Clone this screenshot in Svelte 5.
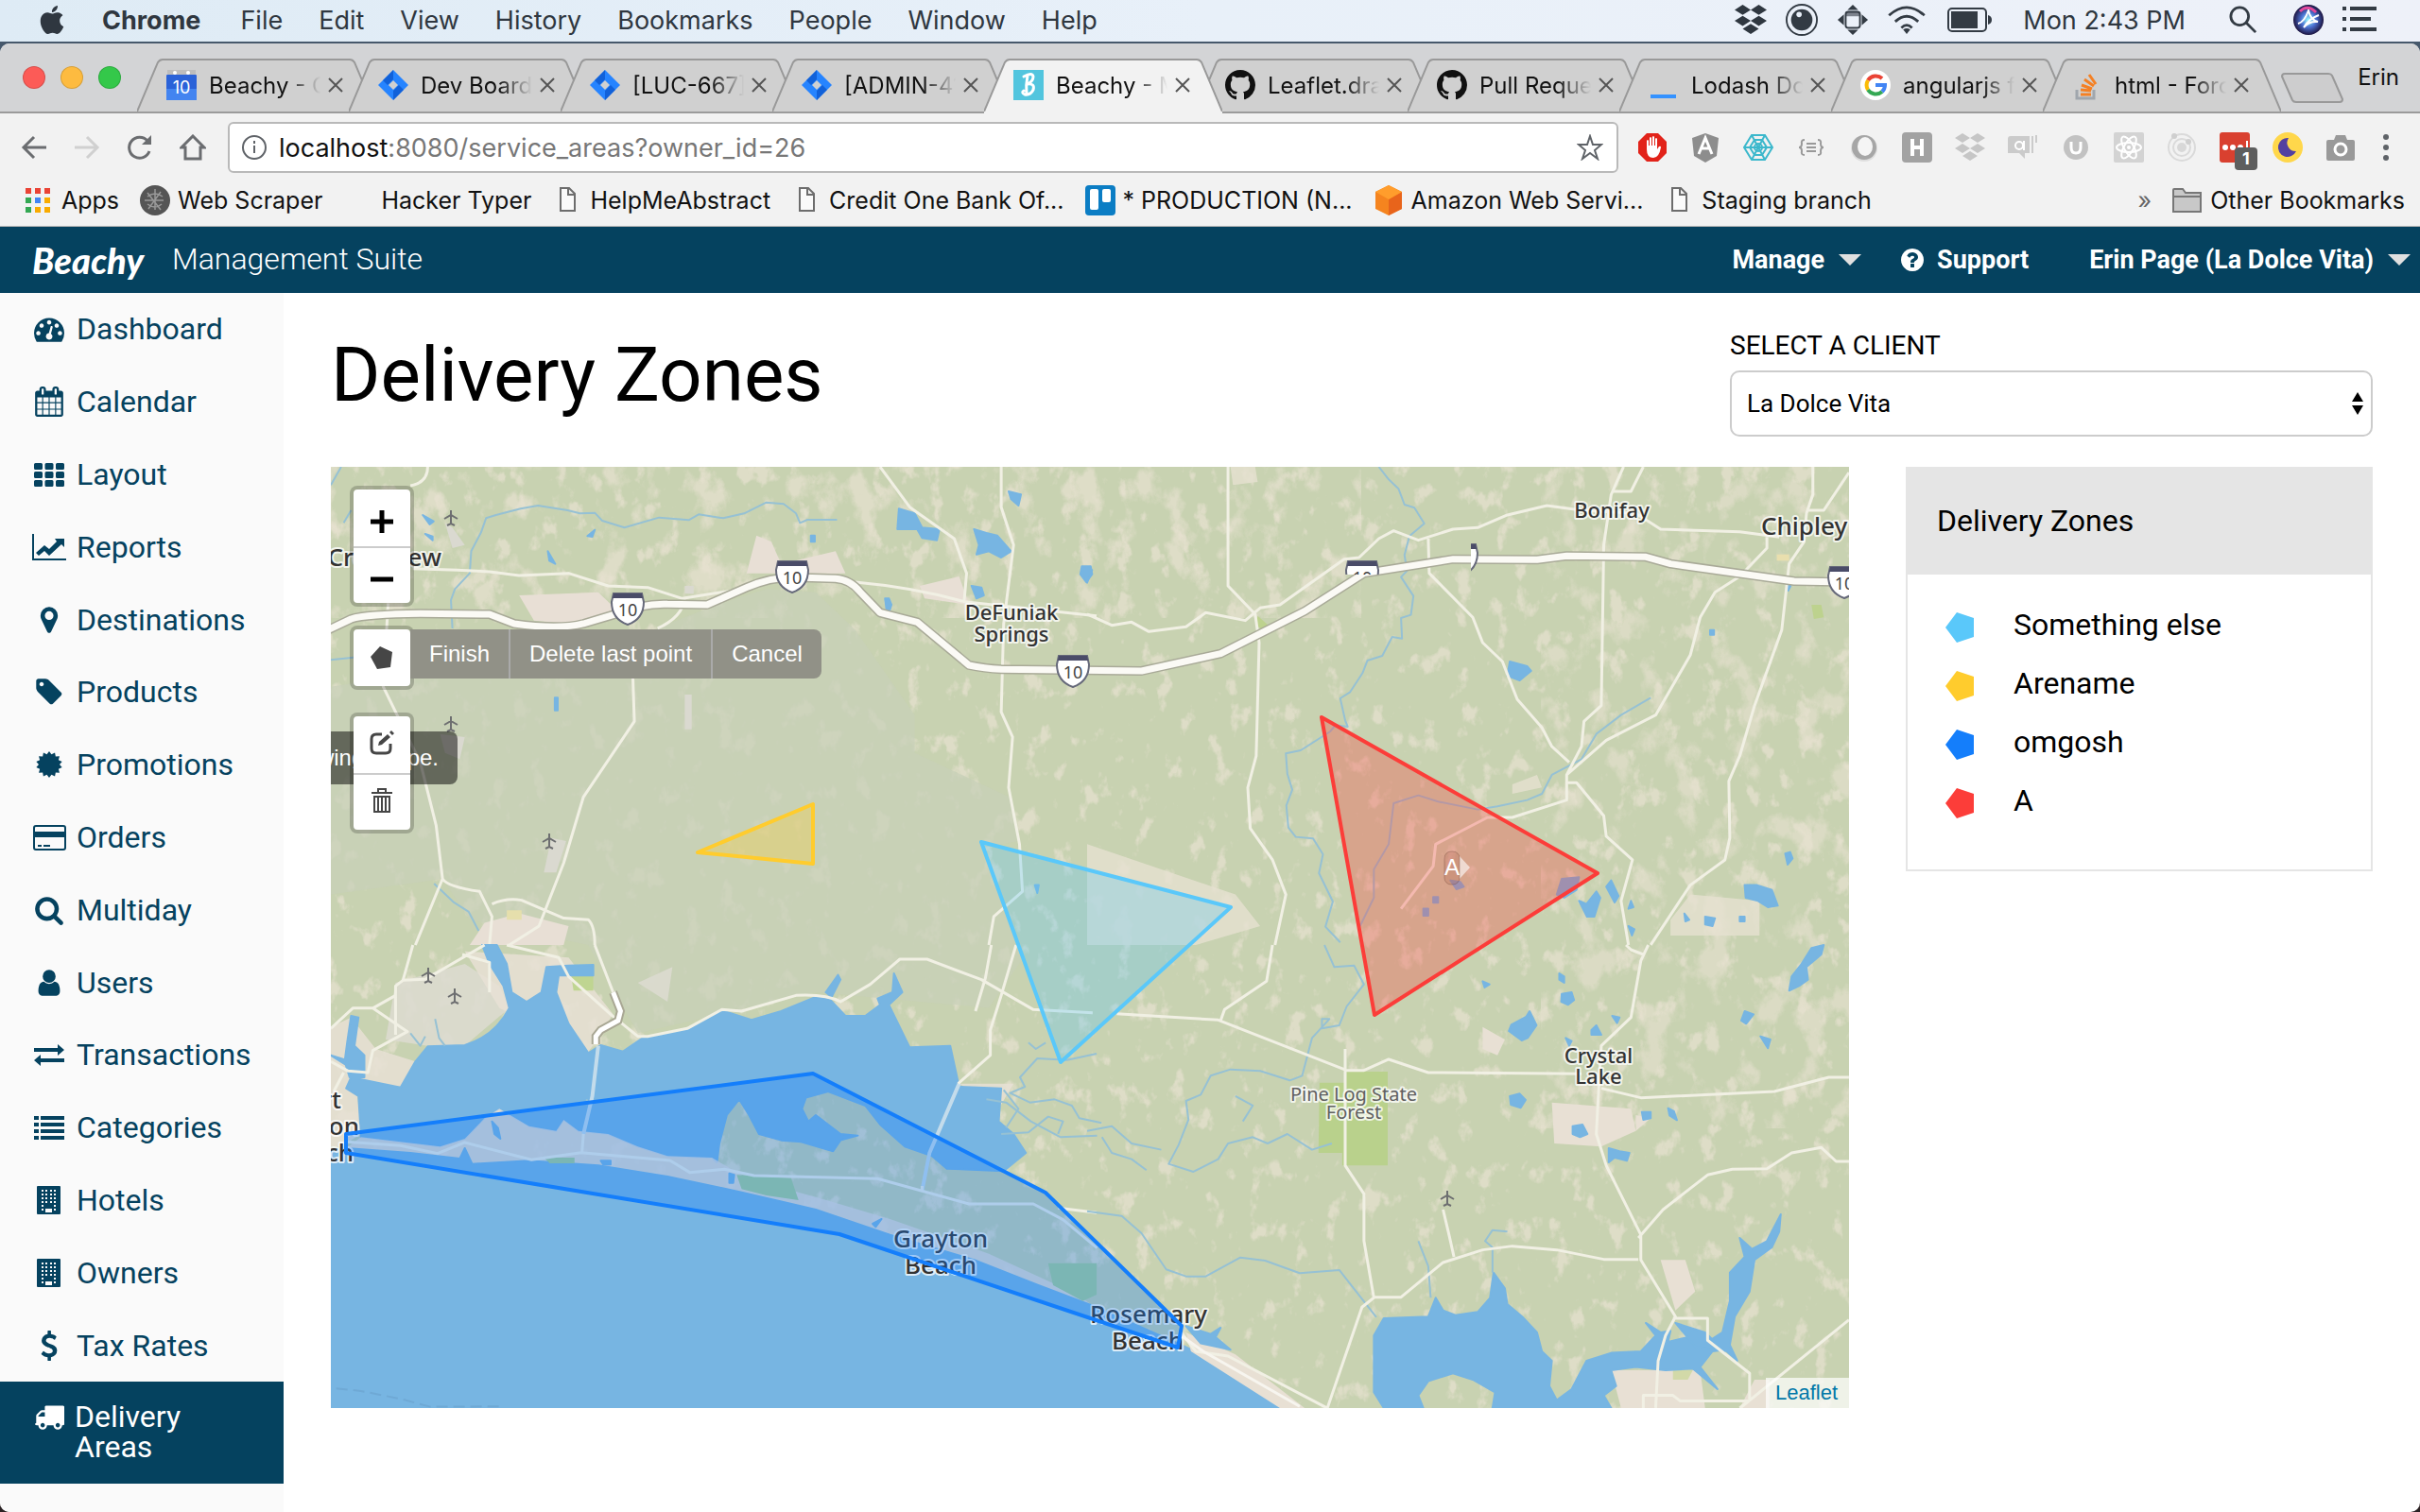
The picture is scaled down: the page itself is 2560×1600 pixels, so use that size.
<script>
  const menus = ['File', 'Edit', 'View', 'History', 'Bookmarks', 'People', 'Window', 'Help'];

  const tabs = [
    { icon: 'calendar', title: 'Beachy - Calendar' },
    { icon: 'jira', title: 'Dev Board - Agile' },
    { icon: 'jira', title: '[LUC-667] Map' },
    { icon: 'jira', title: '[ADMIN-412] Zones' },
    { icon: 'beachy', title: 'Beachy - Management', active: true },
    { icon: 'github', title: 'Leaflet.draw docs' },
    { icon: 'github', title: 'Pull Requests' },
    { icon: 'lodash', title: 'Lodash Documentation' },
    { icon: 'google', title: 'angularjs filter' },
    { icon: 'stack', title: 'html - Force width' }
  ];

  const bookmarks = [
    { icon: 'apps', title: 'Apps' },
    { icon: 'scraper', title: 'Web Scraper' },
    { icon: 'none', title: 'Hacker Typer' },
    { icon: 'doc', title: 'HelpMeAbstract' },
    { icon: 'doc', title: 'Credit One Bank Of...' },
    { icon: 'trello', title: '* PRODUCTION (N...' },
    { icon: 'aws', title: 'Amazon Web Servi...' },
    { icon: 'doc', title: 'Staging branch' }
  ];

  const extensions = ['block', 'angular', 'web', 'braces', 'ball', 'h', 'dropbox', 'chat', 'u', 'react', 'orbit', 'lastpass', 'moon', 'camera'];

  const navigation = ['Dashboard', 'Calendar', 'Layout', 'Reports', 'Destinations', 'Products', 'Promotions', 'Orders', 'Multiday', 'Users', 'Transactions', 'Categories', 'Hotels', 'Owners', 'Tax Rates'];

  const zones = [
    { name: 'Something else', color: '#5ac8fa' },
    { name: 'Arename', color: '#ffcc2d' },
    { name: 'omgosh', color: '#147efb' },
    { name: 'A', color: '#fc3d39' }
  ];

  const shapes = [
    { color: '#ffcc2d', points: '738,902 860,851 860,914' },
    { color: '#5ac8fa', points: '1038,891 1302,960 1122,1124' },
    { color: '#147efb', points: '366,1200 860,1136 1106,1262 1250,1403 1246,1426 888,1306 366,1220' },
    { color: '#fc3d39', points: '1398,759 1690,924 1454,1074' }
  ];

  const planes = [[477, 548], [477, 766], [581, 890], [453, 1032], [481, 1054], [1531, 1268]];

  function star(points, outer, inner) {
    let d = '';
    for (let i = 0; i < points * 2; i++) {
      const r = i % 2 ? inner : outer;
      const a = (Math.PI * i) / points;
      d += `${i ? 'L' : 'M'}${(16 + r * Math.sin(a)).toFixed(2)} ${(16 - r * Math.cos(a)).toFixed(2)}`;
    }
    return d + 'Z';
  }

  function grid(xs, ys, w, h) {
    return ys.map((y) => xs.map((x) => `M${x} ${y}h${w}v${h}h-${w}z`).join('')).join('');
  }

  const building = 'M4 1h23q1 0 1 1v28q0 1-1 1H4q-1 0-1-1V2q0-1 1-1z' + grid([8, 12, 17, 21], [5, 9, 13, 17], 2, 2) + grid([8, 21], [21, 25], 2, 2) + 'M12 25h7v4h-7z';

  const icons = {
    Dashboard: [1792, 'M384 1152q0-53-37.5-90.5t-90.5-37.5-90.5 37.5-37.5 90.5 37.5 90.5 90.5 37.5 90.5-37.5 37.5-90.5zm192-448q0-53-37.5-90.5t-90.5-37.5-90.5 37.5-37.5 90.5 37.5 90.5 90.5 37.5 90.5-37.5 37.5-90.5zm428 481l101-382q6-26-7.5-48.5t-38.5-29.5-48 6.5-30 39.5l-101 382q-60 5-107 43.5t-63 98.5q-20 77 20 146t117 89 146-20 89-117q16-60-6-117t-72-91zm660-33q0-53-37.5-90.5t-90.5-37.5-90.5 37.5-37.5 90.5 37.5 90.5 90.5 37.5 90.5-37.5 37.5-90.5zm-640-640q0-53-37.5-90.5t-90.5-37.5-90.5 37.5-37.5 90.5 37.5 90.5 90.5 37.5 90.5-37.5 37.5-90.5zm448 192q0-53-37.5-90.5t-90.5-37.5-90.5 37.5-37.5 90.5 37.5 90.5 90.5 37.5 90.5-37.5 37.5-90.5zm320 448q0 261-141 483-19 29-54 29h-1402q-35 0-54-29-141-221-141-483 0-182 71-348t191-286 286-191 348-71 348 71 286 191 191 286 71 348z'],
    Calendar: [1792, 'M192 1664h288v-288h-288v288zm352 0h320v-288h-320v288zm-352-352h288v-320h-288v320zm352 0h320v-320h-320v320zm-352-384h288v-288h-288v288zm736 736h320v-288h-320v288zm-384-736h320v-288h-320v288zm768 736h288v-288h-288v288zm-384-352h320v-320h-320v320zm-352-864v-288q0-13-9.5-22.5t-22.5-9.5h-64q-13 0-22.5 9.5t-9.5 22.5v288q0 13 9.5 22.5t22.5 9.5h64q13 0 22.5-9.5t9.5-22.5zm736 864h288v-320h-288v320zm-384-384h320v-288h-320v288zm384 0h288v-288h-288v288zm32-480v-288q0-13-9.5-22.5t-22.5-9.5h-64q-13 0-22.5 9.5t-9.5 22.5v288q0 13 9.5 22.5t22.5 9.5h64q13 0 22.5-9.5t9.5-22.5zm384-64v1280q0 52-38 90t-90 38h-1408q-52 0-90-38t-38-90v-1280q0-52 38-90t90-38h128v-96q0-66 47-113t113-47h64q66 0 113 47t47 113v96h384v-96q0-66 47-113t113-47h64q66 0 113 47t47 113v96h128q52 0 90 38t38 90z'],
    Layout: [32, [0, 11.5, 23].map((x) => [4, 13, 22].map((y) => `M${x + 1.5} ${y}h6q1.5 0 1.5 1.5v4q0 1.5-1.5 1.5h-6q-1.5 0-1.5-1.5v-4q0-1.5 1.5-1.5z`).join('')).join('')],
    Reports: [32, 'M-2 2h2v26h34v2H-2zM2 22l9-8 5 4 8-8-2-3h10v9l-3-3-13 12-5-5-6 5z'],
    Destinations: [1792, 'M1152 640q0-106-75-181t-181-75-181 75-75 181 75 181 181 75 181-75 75-181zm256 0q0 109-33 179l-364 774q-16 33-47.5 52t-67.5 19-67.5-19-46.5-52l-365-774q-33-70-33-179 0-212 150-362t362-150 362 150 150 362z'],
    Products: [1792, 'M576 448q0-53-37.5-90.5t-90.5-37.5-90.5 37.5-37.5 90.5 37.5 90.5 90.5 37.5 90.5-37.5 37.5-90.5zm1067 576q0 53-37 90l-491 492q-39 37-91 37-53 0-90-37l-715-716q-38-37-64.5-101t-26.5-117v-416q0-52 38-90t90-38h416q53 0 117 26.5t102 64.5l715 714q37 39 37 91z'],
    Promotions: [32, star(14, 14, 11)],
    Orders: [32, 'M2 3h29q3 0 3 3v21q0 3-3 3H2q-3 0-3-3V6q0-3 3-3zM2 5q-1 0-1 1v4h31V6q0-1-1-1zM1 16v11q0 1 1 1h29q1 0 1-1V16zM4 24h4v2H4zM10 24h7v2h-7z'],
    Multiday: [1792, 'M1216 832q0-185-131.5-316.5t-316.5-131.5-316.5 131.5-131.5 316.5 131.5 316.5 316.5 131.5 316.5-131.5 131.5-316.5zm512 832q0 52-38 90t-90 38q-54 0-90-38l-343-342q-179 124-399 124-143 0-273.5-55.5t-225-150-150-225-55.5-273.5 55.5-273.5 150-225 225-150 273.5-55.5 273.5 55.5 225 150 150 225 55.5 273.5q0 220-124 399l343 343q37 37 37 90z'],
    Users: [1792, 'M1536 1399q0 109-62.5 187t-150.5 78h-854q-88 0-150.5-78t-62.5-187q0-85 8.5-160.5t31.5-152 58.5-131 94-89 134.5-34.5q131 128 313 128t313-128q76 0 134.5 34.5t94 89 58.5 131 31.5 152 8.5 160.5zm-256-887q0 159-112.5 271.5t-271.5 112.5-271.5-112.5-112.5-271.5 112.5-271.5 271.5-112.5 271.5 112.5 112.5 271.5z'],
    Transactions: [32, 'M0 9h25V5l7 6-7 6v-4H0zM32 20H7v-4l-7 6 7 6v-4h25z'],
    Categories: [32, [4, 11, 18, 25].map((y) => `M0 ${y}h5v4h-5zM7 ${y}h25v4h-25z`).join('')],
    Hotels: [32, building],
    Owners: [32, building],
    'Tax Rates': [1792, 'M1362 1185q0 153-99.5 263.5t-258.5 136.5v175q0 14-9 23t-23 9h-135q-13 0-22.5-9.5t-9.5-22.5v-175q-66-9-127.5-31t-101.5-44.5-74-48-46.5-37.5-17.5-18q-17-21-2-41l103-135q7-10 23-12 15-2 24 9l2 2q113 99 243 125 37 8 74 8 81 0 142.5-43t61.5-122q0-28-15-53t-33.5-42-58.5-37.5-66-32-80-32.5q-39-16-61.5-25t-61.5-26.5-62.5-31-56.5-35.5-53.5-42.5-43.5-49-35.5-58-21-66.5-8.5-78q0-138 98-242t255-134v-180q0-13 9.5-22.5t22.5-9.5h135q14 0 23 9t9 23v176q57 6 110.5 23t87 33.5 63.5 37.5 39 29 15 14q17 18 5 38l-81 146q-8 15-23 16-14 3-27-7-3-3-14.5-12t-39-26.5-58.5-32-74.5-26-85.5-11.5q-95 0-155 43t-60 111q0 26 8.5 48t29.5 41.5 39.5 33 56 31 60.5 27 70 27.5q53 20 81 31.5t76 35 75.5 42.5 62 50 53 63.5 31.5 76.5 13 94z'],
    Delivery: [1792, 'M640 1408q0-52-38-90t-90-38-90 38-38 90 38 90 90 38 90-38 38-90zm-384-512h384v-256h-158q-13 0-22 9l-195 195q-9 9-9 22v30zm1280 512q0-52-38-90t-90-38-90 38-38 90 38 90 90 38 90-38 38-90zm256-1088v1024q0 15-4 26.5t-13.5 18.5-16.5 11.5-23.5 6-22.5 2-25.5 0-22.5-.5q0 106-75 181t-181 75-181-75-75-181h-384q0 106-75 181t-181 75-181-75-75-181h-64q-3 0-22.5.5t-25.5 0-22.5-2-23.5-6-16.5-11.5-13.5-18.5-4-26.5q0-26 19-45t45-19v-320q0-8-.5-35t0-38 2.5-34.5 6.5-37 14-30.5 22.5-30l198-198q19-19 50.5-32t58.5-13h160v-192q0-26 19-45t45-19h1024q26 0 45 19t19 45z'],
    help: [1792, 'M1024 1376v-192q0-14-9-23t-23-9h-192q-14 0-23 9t-9 23v192q0 14 9 23t23 9h192q14 0 23-9t9-23zm256-672q0-88-55.5-163t-138.5-116-170-41q-243 0-371 213-15 24 8 42l132 100q7 6 19 6 16 0 25-12 53-68 86-92 34-24 86-24 48 0 85.5 26t37.5 59q0 38-20 61t-68 45q-63 28-115.5 86.5t-52.5 125.5v36q0 14 9 23t23 9h192q14 0 23-9t9-23q0-19 21.5-49.5t54.5-49.5q32-18 49-28.5t46-35 44.5-48 28-60.5 12.5-81zm384 192q0 209-103 385.5t-279.5 279.5-385.5 103-385.5-103-279.5-279.5-103-385.5 103-385.5 279.5-279.5 385.5-103 385.5 103 279.5 279.5 103 385.5z'],
    apple: [24, 'M12.152 6.896c-.948 0-2.415-1.078-3.96-1.04-2.04.027-3.91 1.183-4.961 3.014-2.117 3.675-.546 9.103 1.519 12.09 1.013 1.454 2.208 3.09 3.792 3.039 1.52-.065 2.09-.987 3.935-.987 1.831 0 2.35.987 3.96.948 1.637-.026 2.676-1.48 3.676-2.948 1.156-1.688 1.636-3.325 1.662-3.415-.039-.013-3.182-1.221-3.22-4.857-.026-3.04 2.48-4.494 2.597-4.559-1.429-2.09-3.623-2.324-4.39-2.376-2-.156-3.675 1.09-4.61 1.09zM15.53 3.83c.843-1.012 1.4-2.427 1.245-3.83-1.207.052-2.662.805-3.532 1.818-.78.896-1.454 2.338-1.273 3.714 1.338.104 2.715-.688 3.559-1.701'],
    github: [16, 'M8 0C3.58 0 0 3.58 0 8c0 3.54 2.29 6.53 5.47 7.59.4.07.55-.17.55-.38 0-.19-.01-.82-.01-1.49-2.01.37-2.53-.49-2.69-.94-.09-.23-.48-.94-.82-1.13-.28-.15-.68-.52-.01-.53.63-.01 1.08.58 1.23.82.72 1.21 1.87.87 2.33.66.07-.52.28-.87.51-1.07-1.78-.2-3.64-.89-3.64-3.95 0-.87.31-1.59.82-2.15-.08-.2-.36-1.02.08-2.12 0 0 .67-.21 2.2.82.64-.18 1.32-.27 2-.27s1.36.09 2 .27c1.53-1.04 2.2-.82 2.2-.82.44 1.1.16 1.92.08 2.12.51.56.82 1.27.82 2.15 0 3.07-1.87 3.75-3.65 3.95.29.25.54.73.54 1.48 0 1.07-.01 1.93-.01 2.2 0 .21.15.46.55.38A8.01 8.01 0 0 0 16 8c0-4.42-3.58-8-8-8z'],
    dropbox: [32, 'M8 1l8 5-8 5-8-5zM24 1l8 5-8 5-8-5zM8 12l8 5-8 5-8-5zM24 12l8 5-8 5-8-5zM16 20l8 5-8 5-8-5z']
  };
</script>

{#snippet glyph(name)}
  <svg class="glyph" viewBox="0 0 {icons[name][0]} {icons[name][0]}" aria-hidden="true"><path fill-rule="evenodd" d={icons[name][1]} /></svg>
{/snippet}

{#snippet favicon(name)}
  {#if name === 'github'}
    {@render glyph('github')}
  {:else}
    <svg class="glyph" viewBox="0 0 32 32" aria-hidden="true">
      {#if name === 'calendar'}
        <rect x="1" width="30" height="7" fill="#bdbdbd" /><circle cx="9" cy="3" r="2" fill="#fff" /><circle cx="23" cy="3" r="2" fill="#fff" />
        <rect y="5" width="32" height="27" rx="1" fill="#2a62d8" /><path d="M0 20h32v12H0z" fill="#4384f0" />
        <text x="16" y="25" text-anchor="middle" class="fav-day">10</text>
      {:else if name === 'jira'}
        <path d="M16 0l16 16-16 16L0 16z" fill="#2684ff" /><path d="M16 0v10l-6 6L5 11zM16 32V22l6-6 5 5z" fill="#0b55cc" opacity=".75" /><path d="M16 11l5 5-5 5-5-5z" fill="#d0d0d0" />
      {:else if name === 'beachy'}
        <rect width="32" height="32" fill="#52c5de" /><path d="M11 7q9-5 10 0 0 5-6 8 8-1 6 6-3 6-9 5-4-2-1-4M15 6q-2 10-1 20" fill="none" stroke="#fff" stroke-width="3" stroke-linecap="round" />
      {:else if name === 'lodash'}
        <path d="M2 26h27v4H2z" fill="#3492ff" />
      {:else if name === 'google'}
        <circle cx="16" cy="16" r="16" fill="#fff" />
        <g fill="none" stroke-width="4"><path d="M8 11a10 10 0 0 1 15-2" stroke="#ea4335" /><path d="M8 11a10 10 0 0 0 0 10" stroke="#fbbc05" /><path d="M8 21a10 10 0 0 0 15 2" stroke="#34a853" /><path d="M23 23q3-3 3-7H16" stroke="#4285f4" /></g>
      {:else if name === 'stack'}
        <path d="M5 21v9h18v-9" fill="none" stroke="#a0a6ad" stroke-width="3" /><path d="M9 26h11M9 21l11 1M10 16l11 4M13 10l10 7M18 5l7 10" stroke="#f48024" stroke-width="3" />
      {:else if name === 'apps'}
        {#each [0, 1, 2] as r}{#each [0, 1, 2] as c}<rect x={2 + c * 10} y={3 + r * 10} width="6" height="6" fill={[['#ea4335', '#ea4335', '#ea4335'], ['#34a853', '#4285f4', '#f9ab00'], ['#34a853', '#f9ab00', '#f9ab00']][r][c]} />{/each}{/each}
      {:else if name === 'scraper'}
        <circle cx="16" cy="16" r="16" fill="#555" /><path d="M8 8l14 18M22 7L9 25M5 16h20M16 4v22M8 12q8-6 16 0M8 20q8 6 15 0" fill="none" stroke="#999" stroke-width="1.5" />
      {:else if name === 'doc'}
        <path d="M9 3h9l6 6v18H9zM17 3v7h7" fill="#fafafa" stroke="#6d6d6d" stroke-width="2" />
      {:else if name === 'trello'}
        <rect width="32" height="32" rx="4" fill="#0b7dc4" /><rect x="5" y="4" width="9" height="22" rx="2" fill="#fff" /><rect x="18" y="4" width="9" height="14" rx="2" fill="#fff" />
      {:else if name === 'aws'}
        <path d="M16 0l14 7v18l-14 7-14-7V7z" fill="#f5841f" /><path d="M16 15l14-8v18l-14 7z" fill="#e8641b" /><path d="M2 7l14-7 14 7-14 8z" fill="#ff9d2c" />
      {/if}
    </svg>
  {/if}
{/snippet}

{#snippet extension(name)}
  {#if name === 'dropbox'}
    <span class="pale">{@render glyph('dropbox')}</span>
  {:else}
    <svg class="glyph" viewBox="0 0 32 32" aria-hidden="true">
      {#if name === 'block'}
        <path d="M10 1h12l9 9v12l-9 9H10l-9-9V10z" fill="#e2231a" /><path d="M10 18V9q1-2 2 0v5h1V6q1-2 2 0v8h1V5q1-2 2 0v9h1V7q1-2 2 0v11l2-3q2-1 2 1-2 11-8 11-7 0-7-9z" fill="#fff" />
      {:else if name === 'angular'}
        <path d="M16 1l14 5-2 19-12 7-12-7L2 6z" fill="#8d8d8d" /><path d="M9 23l7-17 7 17M12 17h8" fill="none" stroke="#fff" stroke-width="3" />
      {:else if name === 'web'}
        <g fill="none" stroke="#3cb8cc" stroke-width="2"><path d="M9 3h14l8 13-8 13H9L1 16z" /><path d="M12 8h8l5 8-5 8h-8l-5-8zM9 3l14 26M23 3L9 29M1 16h30" /><circle cx="16" cy="16" r="4" /></g>
      {:else if name === 'braces'}
        <path d="M9 8q-4 0-3 4 0 4-3 4 3 0 3 4-1 4 3 4M23 8q4 0 3 4 0 4 3 4-3 0-3 4 1 4-3 4M11 12h10M11 16h10M11 20h10" fill="none" stroke="#999" stroke-width="2" />
      {:else if name === 'ball'}
        <circle cx="16" cy="17" r="14" fill="#dedede" /><circle cx="16" cy="16" r="13" fill="#a6a6a6" /><ellipse cx="17" cy="15" rx="8" ry="10" fill="#f5f5f5" />
      {:else if name === 'h'}
        <rect width="32" height="32" rx="4" fill="#a2a2a2" /><path d="M11 7v18M21 7v18M11 16h10" stroke="#fff" stroke-width="4" />
      {:else if name === 'chat'}
        <path d="M0 7q0-3 3-3h20v18h-5v6l-6-6H0z" fill="#cbcbcb" /><path d="M25 4h2v18h-2zM29 3h2v8h-2z" fill="#cbcbcb" /><circle cx="12" cy="14" r="4" fill="none" stroke="#fff" stroke-width="2" /><path d="M17 9v10" stroke="#fff" stroke-width="2" />
      {:else if name === 'u'}
        <circle cx="16" cy="16" r="13" fill="#c2c2c2" /><path d="M11 10v6q0 6 5 6t5-6v-6" fill="none" stroke="#fff" stroke-width="3" />
      {:else if name === 'react'}
        <rect width="32" height="32" rx="2" fill="#d3d3d3" /><g fill="none" stroke="#fff" stroke-width="2"><ellipse cx="16" cy="16" rx="13" ry="5" /><ellipse cx="16" cy="16" rx="13" ry="5" transform="rotate(60 16 16)" /><ellipse cx="16" cy="16" rx="13" ry="5" transform="rotate(120 16 16)" /></g><circle cx="16" cy="16" r="2" fill="#fff" />
      {:else if name === 'orbit'}
        <g fill="none" stroke="#dadada" stroke-width="2"><circle cx="16" cy="16" r="14" /><circle cx="16" cy="16" r="9" /></g><circle cx="16" cy="16" r="5" fill="#d8d8d8" /><circle cx="8" cy="4" r="3" fill="#cfcfcf" /><circle cx="23" cy="10" r="3" fill="#cfcfcf" />
      {:else if name === 'lastpass'}
        <rect width="32" height="32" rx="3" fill="#d9402f" /><g fill="#fff"><circle cx="6" cy="16" r="3" /><circle cx="14" cy="16" r="3" /><circle cx="22" cy="16" r="3" /><path d="M28 9h2v14h-2z" /></g>
      {:else if name === 'moon'}
        <circle cx="16" cy="16" r="16" fill="#ffd74b" /><path d="M17 6a10 10 0 1 0 8 14A9 9 0 0 1 17 6z" fill="#5340a0" />
      {:else if name === 'camera'}
        <path d="M3 8h6l2-5h10l2 5h6q2 0 2 2v18q0 2-2 2H3q-2 0-2-2V10q0-2 2-2z" fill="#999" /><circle cx="16" cy="18" r="6" fill="none" stroke="#fff" stroke-width="3" />
      {/if}
    </svg>
  {/if}
{/snippet}

{#snippet shield(x, y)}
  <g transform="translate({x} {y})">
    <path d="M-15-16h30l2 9q0 18-17 24-17-6-17-24z" class="shield" /><path d="M-15-16h30l1 5h-32z" class="shield-top" />
    <text y="8" text-anchor="middle" class="shield-text">10</text>
  </g>
{/snippet}

<div class="desktop">
  <header class="menubar">
    <nav class="menus" aria-label="Menu bar">
      <button class="apple" aria-label="Apple">{@render glyph('apple')}</button>
      <button class="app-name">Chrome</button>
      {#each menus as menu}<button>{menu}</button>{/each}
    </nav>
    <div class="status">
      <span class="st">{@render glyph('dropbox')}</span>
      <svg class="st" viewBox="0 0 36 36" aria-hidden="true"><circle cx="18" cy="18" r="17" fill="none" stroke="#333b44" stroke-width="2" /><circle cx="18" cy="18" r="12" fill="#333b44" /><circle cx="15" cy="12" r="3" fill="#e8eff8" /></svg>
      <svg class="st" viewBox="0 0 36 36" aria-hidden="true"><g fill="#333b44"><path d="M18 1l6 6H12zM18 35l6-6H12zM1 18l7-6v12zM35 18l-7-6v12z" /><path d="M10 9h16v5H10z" opacity=".6" /></g><rect x="10" y="9" width="16" height="18" rx="3" fill="none" stroke="#333b44" stroke-width="2" /></svg>
      <svg class="st wifi" viewBox="0 0 42 32" aria-hidden="true"><g fill="none" stroke="#333b44" stroke-width="3"><path d="M1 11q20-18 40 0M8 18q13-12 26 0M15 25q6-6 12 0" /></g><path d="M21 32l-4-5q4-3 8 0z" fill="#333b44" /></svg>
      <svg class="st battery" viewBox="0 0 48 26" aria-hidden="true"><rect x="1" y="1" width="40" height="24" rx="4" fill="none" stroke="#333b44" stroke-width="2" /><path d="M4 4h28v18H4z" fill="#333b44" /><path d="M43 8q4 1 4 5t-4 5z" fill="#333b44" /></svg>
      <time>Mon 2:43 PM</time>
      <svg class="st search" viewBox="0 0 32 32" aria-hidden="true"><g fill="none" stroke="#333b44" stroke-width="3"><circle cx="12" cy="12" r="10" /><path d="M19 19l11 11" /></g></svg>
      <svg class="st" viewBox="0 0 34 34" aria-hidden="true"><defs><radialGradient id="siri"><stop offset="0" stop-color="#9ff" /><stop offset=".5" stop-color="#4b6fd0" /><stop offset="1" stop-color="#1c1440" /></radialGradient></defs><circle cx="17" cy="17" r="16" fill="url(#siri)" /><path d="M6 21q7-2 11-14 2 10 10 12-9-1-15 6 5-9 16-13" fill="none" stroke="#fff" stroke-width="2" /><path d="M8 8q8-8 17 1" stroke="#e3489c" stroke-width="3" fill="none" /></svg>
      <svg class="st" viewBox="0 0 36 30" aria-hidden="true"><path d="M0 3h4M8 3h28M0 14h4M8 14h22M0 25h4M8 25h28" stroke="#333b44" stroke-width="4" /></svg>
    </div>
  </header>

  <div class="window">
    <div class="tabstrip">
      <div class="lights"><i class="red"></i><i class="amber"></i><i class="green"></i></div>
      <div class="tabs" role="tablist">
        {#each tabs as tab}
          <div class="tab" class:active={tab.active} role="tab" aria-selected={!!tab.active} tabindex="0">
            <svg class="tab-shape" viewBox="0 0 252 57" preserveAspectRatio="none" aria-hidden="true"><path d="M0 57L22 4Q24 1 27 1H225Q228 1 230 4L252 57" /></svg>
            <span class="fav">{@render favicon(tab.icon)}</span>
            <span class="tab-title">{tab.title}</span>
            <button class="close" aria-label="Close tab"><svg viewBox="0 0 16 16"><path d="M1 1l14 14M15 1L1 15" /></svg></button>
          </div>
        {/each}
      </div>
      <button class="new-tab" aria-label="New tab"><svg viewBox="0 0 66 32"><path d="M4 1H50Q53 1 54 3L65 28Q65 31 62 31H16Q13 31 12 29L1 4Q1 1 4 1Z" /></svg></button>
      <span class="profile">Erin</span>
    </div>

    <div class="toolbar">
      <button aria-label="Back"><svg viewBox="0 0 28 28"><path d="M27 14H3M14 3L3 14l11 11" /></svg></button>
      <button aria-label="Forward" class="off"><svg viewBox="0 0 28 28"><path d="M1 14h24M14 3l11 11-11 11" /></svg></button>
      <button aria-label="Reload"><svg viewBox="0 0 28 28"><path d="M24 18A11 11 0 1 1 22 7" /><path d="M26 1v10H16z" class="solid" /></svg></button>
      <button aria-label="Home"><svg viewBox="0 0 28 28"><path d="M2 14L14 2l12 12h-4v12H6V14z" /></svg></button>
      <div class="omnibox">
        <svg viewBox="0 0 28 28" aria-hidden="true"><circle cx="14" cy="14" r="12" /><path d="M14 12v8M14 7v3" /></svg>
        <a href="#address" class="url">localhost<span>:8080/service_areas?owner_id=26</span></a>
        <svg viewBox="0 0 28 28" aria-hidden="true"><path d="M14 2l3 9h9l-7 6 3 9-8-6-8 6 3-9-7-6h9z" /></svg>
      </div>
      <div class="extensions">
        {#each extensions as name}
          <button class="ext" aria-label={name}>{@render extension(name)}{#if name === 'lastpass'}<b class="badge">1</b>{/if}</button>
        {/each}
        <button class="ext dots" aria-label="Menu"><i></i><i></i><i></i></button>
      </div>
    </div>

    <nav class="bookmarks" aria-label="Bookmarks">
      {#each bookmarks as mark}
        <a href="#bookmark"><span class="fav">{@render favicon(mark.icon)}</span>{mark.title}</a>
      {/each}
      <span class="more">»</span>
      <a href="#bookmark"><span class="fav"><svg class="glyph" viewBox="0 0 32 32" aria-hidden="true"><path d="M1 9V5q0-1 1-1h9l3 4h16v20H1zM1 12h30" fill="#c8c8c8" stroke="#777" stroke-width="2" /></svg></span>Other Bookmarks</a>
    </nav>

    <header class="appbar">
      <a href="#home" class="logo">Beachy</a>
      <span class="suite">Management Suite</span>
      <button class="drop">Manage<i class="caret"></i></button>
      <a href="#support" class="support"><span>{@render glyph('help')}</span>Support</a>
      <button class="drop">Erin Page (La Dolce Vita)<i class="caret"></i></button>
    </header>

    <div class="body">
      <nav class="sidebar" aria-label="Main">
        <ul>
          {#each navigation as item}
            <li><a href="#{item}"><span class="ic">{@render glyph(item)}</span>{item}</a></li>
          {/each}
        </ul>
        <a href="#areas" class="current" aria-current="page"><span class="ic">{@render glyph('Delivery')}</span><span>Delivery Areas</span></a>
      </nav>

      <main>
        <div class="heading">
          <h1>Delivery Zones</h1>
          <div class="client">
            <label for="client">SELECT A CLIENT</label>
            <div class="select-wrap">
              <select id="client"><option>La Dolce Vita</option></select>
              <svg viewBox="0 0 12 24" aria-hidden="true"><path d="M6 0l6 10H0zM6 24l6-10H0z" /></svg>
            </div>
          </div>
        </div>

        <div class="columns">
          <section class="map" aria-label="Map">
            <svg class="canvas" viewBox="350 494 1606 996" preserveAspectRatio="xMidYMid slice">
              <defs>
                <filter id="fields" x="0" y="0" width="100%" height="100%" color-interpolation-filters="sRGB">
                  <feTurbulence type="fractalNoise" baseFrequency=".05 .035" numOctaves="4" seed="8" />
                  <feColorMatrix values="0 0 0 0 .91  0 0 0 0 .885  0 0 0 0 .82  7 0 0 0 -4.2" />
                </filter>
                <filter id="farms" x="0" y="0" width="100%" height="100%" color-interpolation-filters="sRGB">
                  <feTurbulence type="fractalNoise" baseFrequency=".03 .022" numOctaves="5" seed="21" />
                  <feColorMatrix values="0 0 0 0 .91  0 0 0 0 .885  0 0 0 0 .82  6 0 0 0 -3.3" />
                </filter>
                <clipPath id="upper"><path d="M350 494h1606v114H350z" /></clipPath>
                <clipPath id="east"><path d="M1556 494h400v200h-400z" /></clipPath>
              </defs>
              <rect x="350" y="494" width="1606" height="996" fill="#c8d2b1" />
              <rect x="350" y="494" width="1606" height="996" filter="url(#fields)" opacity=".7" />
              <rect x="350" y="494" width="1090" height="160" filter="url(#farms)" opacity=".7" />
              <rect x="1630" y="494" width="326" height="700" filter="url(#farms)" opacity=".6" />

              <g class="sheet" transform="translate(340 480) scale(.523 .3333)">
                <path d="M19 740L620 590 800 480 900 430 1000 440 1080 560 1200 830V950L1390 1090 1410 1230 1340 1250 1420 1600 1350 1760 1000 1710 640 1840 540 1560 300 1480 245 1350 19 1400z" fill="#c7d0b8" opacity=".72" />
                <path d="M860 380L880 260 910 280 930 350 1040 310 1060 380zM400 450L560 440 600 500 500 540 430 530zM1210 420L1290 390 1310 480 1220 460zM300 1560L330 1490 400 1460 500 1500 490 1560z" fill="#e8dfd5" />
                <path d="M250 220L265 235 290 290 265 300zM735 765h14v110h-14zM240 890l50 10-10 70-30-20zM450 1330l15-110 30 10-20 100zM735 420h18v25h-18z" fill="#dad9d0" />
                <path d="M375 1450h30v30h-30z" fill="#e6dfac" />
                <g class="river">
                  <path d="M265 555l-3-90 8-35 30-50 3-70 20-60 10-45 20-10 50-20 35-10 60 15 25 10 30-2 15 25 45 22 70-32 60 8 20-18 50 12 42-15 45-35 35 5 25 30 8 30 15-10h60" />
                  <path d="M19 655l60-10M19 100L40 42M228 1365l40 60 30 30 20 60M45 220l15-40" />
                </g>
                <path class="water" d="M1168 175L1200 190 1215 235 1250 240 1245 275 1215 268 1205 240 1165 240zM1320 240l25 12 22 8 28 50-20 20-25-20-25 10 5-30zM1538 358h18l3 25-12 25-12-25zM1390 120l25 10-5 35-15-20zM1315 420l20 5 5 25-15 10zM205 195l22 20-8 10zM210 255l15 8v12zM458 310l15 40-12-10zM538 262l15-20-5 22zM472 775h6v40h-6zM1140 460h8l5 20-8 40zM1443 1370h8l-3 25zM990 260h8v20h-8z" />
                <g class="road">
                  <path d="M215 42q0 50-35 60M185 365l90 5 65 5 60 12 100-7 80 40 80 5 70 35 140-35M735 460q-5 60-55 95M1130 42l60 128 90 100 25 110-5 90M1375 42v128l25 120-20 250-5 280 23 80-8 160 22 180 6 150-58 80-10 90M1080 408q120 17 220 62l268 45" />
                  <path d="M135 475l-10 265 75 240 32 200 13 170-55 210M245 1350q10 25 75 40l25 80-5 90M630 710l3 140-103 240-40 210-50 200-60 60M345 1430q30-20 60-12l85 57 50 5q13 20 13 80" />
                </g>
              </g>

              <g class="sheet" transform="translate(1150 480) scale(.523 .3333)">
                <path d="M0 1240L300 1400 350 1500 220 1560H0zM1180 1480L1220 1400 1360 1420V1530H1180zM290 42H340L345 90 295 100zM860 1050l50-30 10 40-60 20z" fill="#e6e1d1" opacity=".8" />
                <path d="M345 515l25 35-10 15-18-20zM1465 480h20l5 40-20 5z" fill="#bdd28e" />
                <path d="M1395 320h25v20h-25z" fill="#e9dfae" />
                <g class="river">
                  <path d="M590 42l20 40 20 30 12 50 20 10 20 50-30 40-10 60 5 50-12 20 25 60-5 60-20 10 2 65-20-5-20 60-30 15-10 40-25 60-20 20 10 70 5 20-25-5-10 20-60 60-30 10 3 65 10 50-12 50 4 70 15 30 35 5 20 50-8 60 28 90-15 80 30 50" />
                  <path d="M1140 775l-60 55-50 60-30 80-60 50-20 60-30 20-60 20-40 10-80-25-40-20-50 25-10 130-30 80v90l-28 90" />
                </g>
                <path class="water" d="M855 660L890 675 898 690 875 720 850 705zM960 1350l35-5-5 40-25 25-15-10zM995 1420l15 10 20-40 8 20-12 60-15 0zM1050 1375l10-20 15 50-8 20zM1330 1370l25 0 30 15 12 50-20 5-20-20-25-10zM1412 1270l10-5 5 20-10 20zM1208 1460l10 20-8 5zM1250 1470l20 5-5 25-15-5zM1320 1470h10v15h-10zM1100 1420l5 20-10 5zM1095 1500l12 10-5 20zM1260 560h8v15h-8zM1415 420h8l-5 15zM0 360l10 10-10 40zM735 1355l20 5 7 15-15 8zM700 1408h10v18h-10zM680 1445h10v22h-10z" />
                <g class="road">
                  <path d="M285 42v378l55 90 8 90-6 360-17 100 5 130 45 100 27 110-22 160M0 510l50 35 40-10 35 30 75-15 40-45 80 25 30-40 40-10 130-145 30-5 40-60 30-25 50 30 70-35 50-5 60-40 80-30 70 15 110 10 50 50 160 8 80 17" />
                  <path d="M690 270l2 110 88 140 20 80 40 60 30 120 50 90 20 60 35 50M1085 42l-25 88-15 160-5 510-35 50-5 80-30 90v80l-110 55h-50l-105 85-5 70-65 135M1125 42l-25 78h-35M1468 42v88l-13 60-5 90-30 70-15 210-55 240-30 160-22 80 2 180-10 70-70 80-80 190M1541 60l-51 120h-35M1375 265v35l-55 90-50 50-30 80-20 120-70 190-100 80-80 110M970 1045h20l55 105 5 65 53 75-23 130 15 140" />
                </g>
              </g>

              <g class="sheet" transform="translate(340 1000) scale(.523 .3333)">
                <path d="M150 120L290 60 360 130 380 200 290 320 215 320 130 300zM640 120l70-50-10 110z" fill="#dcdacf" opacity=".9" />
                <path d="M19 260L60 230 110 330 190 370 165 450 19 430zM290 20L500 40 590 220 540 340 360 200zM1290 440L1400 440 1370 520zM19 430H70L80 600 40 640H19z" fill="#e8e0d5" opacity=".85" />
                <path d="M505 95h45v50h-40z" fill="#bfd591" />
                <path class="water" d="M80 605L75 480 50 455 60 420 90 430 160 452 190 370 215 322 290 318Q350 290 380 200L368 130 340 60 325 0H355L375 60 385 150 415 180 445 150 455 70 500 65 550 63V97L480 97 475 150 500 250 540 343 565 318 610 338 650 295 740 270 810 208 870 238 930 210 1000 165 1030 175 1060 225 1100 225 1130 190 1125 170 1155 150 1158 90 1175 150 1148 190 1190 325 1272 320 1290 450 1375 455 1370 560 1400 600 1425 660 1380 718 1265 710 1235 670 1180 640 1130 570 1100 510 1025 465 980 485 972 520 985 560 1000 540 1050 600 1085 605 1050 620 1035 655 970 625 930 620 885 600 865 540 845 490 820 540 805 630 800 690 790 675 700 670 640 640 580 600 520 590 490 555 475 590 420 575 360 520 330 550 290 615 240 640 80 610Z" />
                <path d="M80 610L240 640 290 615 330 550 360 520 420 575 475 590 490 555 520 590 580 600 640 640 700 670 790 675 860 740 1000 800 1150 870 1350 980 1530 1110 1560 1145 1450 1080 1320 1000 1150 920 1000 840 850 785 700 735 560 700 420 685 305 695 290 645 280 678 180 660 50 645z" fill="#e8dfd8" opacity=".8" />
                <path class="water" d="M19 700V650L50 645 180 660 280 678 290 645 305 695 420 685 560 700 700 735 850 785 1000 840 1150 920 1320 1000 1450 1080 1560 1145 1740 1270 1850 1350 1985 1480H19z" />
                <path class="water" d="M60 225l15 5-8 90 20 30v70l-30 0-10-50 5-60zM1020 150l25-55 5 15-18 55zM19 350l40 20-10 10zM825 725l10 5-2 25-8 0zM850 745l25 10 3 12-25-3zM895 765l25 15 5 15-20-5zM1115 885l18-15-12 25zM345 560l12 20 5 35-12-15zM565 685h20v12h-15z" />
                <path d="M840 730L950 740 965 810 900 795 850 775zM1470 1010H1568V1110L1540 1130 1480 1080zM450 675h62v18h-50z" fill="#a8cf95" />
                <g class="river">
                  <path d="M1568 345l-60 20-60-5-35 60 10 30-30 20 40 30 50-10 35 20 15 40 45 15M1345 490l40 10 50 60 60 50 74-5M1375 600l55-5 40-50 30 15-10 40M1380 460l30 60-25 60M1430 310l15 20 20-20M180 280l20 40 10-30M230 235l8 60 12 25M540 500l-4-10" />
                </g>
                <path d="M560 320L548 480 530 600M1290 440L1230 660 1215 780" fill="none" stroke="#c4dceb" stroke-width="4" />
                <g class="road">
                  <path d="M19 265l45-65h40l70 75-70 60-10 70-40-5L19 370M45 405l-20 60M105 200l45-40v125M150 160v-30l15-18 45-3L330 0M185 0l-20 112M285 30l55 25v95M375 0l105 40 20 60 85 120 55 70 20 0 80-25 70-60 40 5 110-50q60-5 90 20l60-55 60-80h55l110 65 105 95 120 10M553 0l37 150M1355 0l-12 105-20 105M1405 0l-30 160-22 110v80l-65 90" />
                  <path d="M50 625l110 12 75 25 55-35 135 55 100-23 180 25 40 38 70-10 60 20 250 10 185 80h130l60 50 69 90M530 600l-3 60M1215 780v-15M1490 835l78 15" />
                </g>
                <path d="M590 150l15 60-5 30-35 30-10 20v25" fill="none" stroke="#a9a794" stroke-width="9" /><path d="M590 150l15 60-5 30-35 30-10 20v25" fill="none" stroke="#fff" stroke-width="5" />
                <path d="M30 1408l50 8 80 25 60 25 140-1" fill="none" stroke="#6fa9d5" stroke-width="2" stroke-dasharray="12 6" />
              </g>

              <g class="sheet" transform="translate(1150 1000) scale(.523 .3333)">
                <path d="M470 437H522V402H608V700H516V660H468z" fill="#b9d18c" />
                <path d="M940 500L1100 520 1110 590 1040 640 945 630zM1110 590V540l30 10zM1160 1000l50 0 20 100-40 60zM800 260l45 40-15 50-30-20zM1060 1350h120l60 0 10 120h-170zM1350 1380h30v90h-60zM200 1230l100 70 140 170h-50L210 1290z" fill="#e8e0d4" />
                <path d="M1185 1350h40l-10 30h-30z" fill="#d2d9a8" />
                <path class="water" d="M600 1185L690 1180 705 1120 720 1160 745 1175 790 1165 815 1120 822 1040 845 1090 850 1140 880 1180 910 1230 920 1290 940 1320 935 1400 950 1445 980 1410 1010 1320 1060 1295 1120 1290 1150 1240 1130 1200 1160 1230 1180 1225 1175 1260 1215 1245 1260 1255 1285 1230 1300 1130 1300 1040 1330 990 1320 930 1345 965 1375 940 1403 855 1400 910 1385 960 1350 1000 1340 1100 1310 1180 1300 1270 1315 1320 1290 1285 1265 1290 1240 1340 1275 1410 1225 1345 1170 1350 1110 1340 1060 1350 1070 1400 1045 1430 1060 1470H820L825 1420 780 1380 740 1360 690 1385 670 1430 680 1470H600L580 1420V1240z" />
                <path class="water" d="M1465 10L1490 0 1485 30 1455 70 1458 110 1440 130 1420 145 1425 100 1445 60zM895 210l14 45-18 40-12 8-26-30 5-20 30-25zM960 155l20-5 5 25-12 15-14-10zM955 90l10 10v20l-10-10zM855 480l20-8 12 20-10 25-20-10zM982 575l20-5 10 30-15 10-15-10zM1055 645l22 10 20 5-5 25-25-10-12 15zM1122 530h18v20l-15 5zM1175 518l12 10 6 28-15-15zM1330 210l18 10-15 30-10-10zM1362 290l20 10-5 28zM1062 225l15 5-5 18zM968 295l12 10-5 15zM800 115l14 10-10 10zM1020 270l10-15 10 30-20 0zM1190 1200l60 30 20 30 20 30-60-15zM200 1210l50 25 20-20-10 30 30 40-60-20z" />
                <g class="river">
                  <path d="M480 0l20 70 40-5 20 60-35 70-15 60-35 10v-30l15 0-35 60-20 120-25 15-60-30-60-5-40 20-20 60-30 20 5 60-20 80-20 60 50 25 50-40 20-50 50-20 30 20 40-30 50 50 40-20M300 480l35 30-20 50M0 590l50-15 40 55 60 20M30 610l20 50 40 20 30 35M0 845l70 15 40 55 50 115 40 22h40l70-60 50 10 70 40 80-10 75 150M670 940l20 80 5 100M820 1040v-80l-15-20 15-35 30 5" />
                </g>
                <g class="road">
                  <path d="M60 218l205 20 260 160h35l50-35 80 42 310 4M375 0l-12 115-85 90-8 35M522 330v370l38 90v150l20 180-24 30-70 320M580 1118h55l85-110 80-40 60-12 90 12 95 30h70M720 840l12 80 10 70M1040 455l80 30 270-20 110-45h41M1135 0l-15 50-20 180-60 90-5 130-5 150 20 100 70 220v80l70 180-20 60-15 80-5 150M1115 930l50-90 90-110 50-18 70-2 50-50 60-17 30 44h31M1185 1185h70v70l85 105v85l-20 25M1541 1190l-220 280M1125 1470v-40h60l15 18h140M190 1230l30 60 65 15L485 1470M1090 0l10 15 25 15" />
                </g>
                <path d="M190 1240l45 50L430 1465" fill="none" stroke="#f7f5ef" stroke-width="3" />
              </g>

              <g class="sheet" transform="translate(340 480) scale(.523 .3333)">
                {#each ['casing', 'motorway'] as layer}
                  <path class={layer} d="M0 570L60 525Q90 510 200 508L340 510 390 540Q480 560 530 540L590 512Q650 475 700 478L780 480 860 425Q910 390 960 393L1040 397Q1070 400 1090 440L1130 505 1205 535 1310 672Q1340 682 1375 685L1659 690 1819 635 1989 500 2109 380 2289 335 2459 337 2519 325 2679 328 2729 350 2979 405 3100 408" />
                {/each}
              </g>

              {@render shield(664, 644)}
              {@render shield(838, 610)}
              {@render shield(1135, 710)}
              <g clip-path="url(#upper)">{@render shield(1441, 610)}</g>
              <g clip-path="url(#east)">{@render shield(1546, 592)}</g>
              {@render shield(1951, 616)}

              {#each planes as [x, y]}
                <path class="plane" d="M{x} {y - 8}v15M{x - 7} {y + 1}l7-4 7 4M{x - 4} {y + 8}l4-2 4 2" />
              {/each}

              <g class="place">
                <text x="467" y="599" text-anchor="end" class="big">Crestview</text>
                <text x="1070" y="656" text-anchor="middle">DeFuniak</text>
                <text x="1070" y="679" text-anchor="middle">Springs</text>
                <text x="1705" y="548" text-anchor="middle">Bonifay</text>
                <text x="1863" y="566" class="big">Chipley</text>
                <text x="1691" y="1125" text-anchor="middle">Crystal</text>
                <text x="1691" y="1147" text-anchor="middle">Lake</text>
                <text x="1432" y="1165" text-anchor="middle" class="park">Pine Log State</text>
                <text x="1432" y="1184" text-anchor="middle" class="park">Forest</text>
                <text x="361" y="1173" text-anchor="end" class="big">Fort</text>
                <text x="380" y="1201" text-anchor="end" class="big">Walton</text>
                <text x="374" y="1229" text-anchor="end" class="big">Beach</text>
                <text x="995" y="1320" text-anchor="middle" class="big">Grayton</text>
                <text x="995" y="1348" text-anchor="middle" class="big">Beach</text>
                <text x="1215" y="1400" text-anchor="middle" class="big">Rosemary</text>
                <text x="1214" y="1428" text-anchor="middle" class="big">Beach</text>
              </g>

              {#each shapes as shape}
                <polygon points={shape.points} fill={shape.color} stroke={shape.color} class="zone" />
              {/each}
              <path d="M1544 906l11 12-11 12z" fill="#fff" opacity=".6" />
              <rect x="1528" y="901" width="16" height="35" rx="7" class="pin" />
              <text x="1536" y="926" text-anchor="middle" class="pin-text">A</text>
            </svg>

            <div class="tooltip"><span>Click to continue drawing shape.</span></div>
            <div class="controls">
              <div class="bar zoom">
                <button aria-label="Zoom in"><svg viewBox="0 0 26 26"><path d="M13 1v24M1 13h24" class="thick" /></svg></button>
                <button aria-label="Zoom out"><svg viewBox="0 0 26 26"><path d="M1 13h24" class="thick" /></svg></button>
              </div>
              <div class="draw">
                <div class="bar"><button aria-label="Draw a polygon"><svg viewBox="0 0 26 26"><path d="M11 1l13 6-2 16-14 2L1 12z" class="solid" /></svg></button></div>
                <div class="actions"><button>Finish</button><button>Delete last point</button><button>Cancel</button></div>
              </div>
              <div class="bar edit">
                <button aria-label="Edit layers"><svg viewBox="0 0 26 26"><path d="M13 4H7Q2 4 2 9v10q0 5 5 5h10q5 0 5-5v-5" class="line" /><path d="M9 16l1-4L19 4l3 3-9 8zM21 2l2-2 3 3-2 2z" class="solid" /></svg></button>
                <button aria-label="Delete layers"><svg viewBox="0 0 26 26"><path d="M2 5h22M9 4V1h8v3M5 9h16v16H5zM9 9v16M13 9v16M17 9v16" class="line thin" /></svg></button>
              </div>
            </div>
            <div class="credit"><a href="#leaflet">Leaflet</a></div>
          </section>

          <aside class="legend">
            <h2>Delivery Zones</h2>
            <ul>
              {#each zones as zone}
                <li><svg viewBox="0 0 30 32" aria-hidden="true"><path d="M12 0l18 6v20l-18 6L0 16z" fill={zone.color} /></svg>{zone.name}</li>
              {/each}
            </ul>
          </aside>
        </div>
      </main>
    </div>
  </div>
</div>

<style>
  :global(body) { margin: 0; background: #2b2224; }
  * { box-sizing: border-box; }
  button { border: 0; padding: 0; margin: 0; background: none; color: inherit; font: inherit; }
  a { color: inherit; text-decoration: none; }
  ul { list-style: none; margin: 0; padding: 0; }
  .glyph { display: block; width: 100%; height: 100%; fill: currentColor; overflow: visible; }
  .desktop { min-height: 100vh; display: flex; flex-direction: column; font-family: Inter, "Liberation Sans", sans-serif; color: #111; background: linear-gradient(#46586b 60px, #2b2224 200px); }

  .menubar { height: 46px; display: flex; align-items: center; justify-content: space-between; padding: 0 46px 2px 40px; background: linear-gradient(90deg, #deebf5, #e8f0f9 50%, #eef1f9); border-bottom: 2px solid #46586b; color: #2f3740; font-size: 27px; }
  .menus { display: flex; align-items: center; gap: 38px; }
  .apple { width: 30px; height: 30px; }
  .app-name { font-weight: 700; margin-right: 4px; }
  .status { display: flex; align-items: center; gap: 18px; white-space: nowrap; }
  .st { width: 36px; height: 34px; flex: none; }
  .st.wifi { width: 42px; height: 30px; margin-right: 4px; }
  .st.battery { width: 48px; height: 26px; }
  .st.search { width: 30px; height: 30px; margin: 0 18px 0 28px; }
  .status time { margin-left: 14px; }

  .window { flex: 1; display: flex; flex-direction: column; border-radius: 10px; overflow: hidden; background: #fff; }
  .tabstrip { height: 74px; display: flex; align-items: flex-end; background: #d3d4d6; border-bottom: 2px solid #9b9b9b; padding: 0 22px 0 24px; }
  .lights { display: flex; gap: 16px; align-self: center; width: 121px; }
  .lights i { width: 24px; height: 24px; border-radius: 50%; border: 1px solid rgba(0, 0, 0, .15); }
  .red { background: #fc5b57; }
  .amber { background: #fdbb40; }
  .green { background: #34c84a; }
  .tabs { display: flex; }
  .tab { position: relative; width: 252px; height: 58px; margin-right: -28px; margin-bottom: -2px; padding: 0 34px 0 31px; display: flex; align-items: center; font-size: 24px; color: #111; border-bottom: 2px solid #9b9b9b; }
  .tab-shape { position: absolute; inset: 0; width: 100%; height: 100%; fill: #d0d0d0; stroke: #999; stroke-width: 2; }
  .tab.active { z-index: 1; border-bottom-color: #f2f2f2; }
  .tab.active .tab-shape { fill: #f2f2f2; }
  .fav { position: relative; width: 32px; height: 32px; flex: none; }
  .fav-day { font: 18px Inter, sans-serif; fill: #fff; }
  .tab-title { position: relative; flex: 1; margin: 0 8px 0 13px; overflow: hidden; white-space: nowrap; mask-image: linear-gradient(90deg, #000 70%, transparent); }
  .close { position: relative; width: 16px; height: 16px; }
  .close svg { display: block; stroke: #555; stroke-width: 2; }
  .new-tab { width: 66px; height: 32px; margin: 0 0 9px 28px; }
  .new-tab svg { display: block; fill: #cdcdce; stroke: #999; stroke-width: 2; }
  .profile { align-self: center; margin-left: auto; padding-bottom: 2px; font-size: 24px; }

  .toolbar { height: 72px; display: flex; align-items: center; gap: 28px; padding: 0 20px 0 22px; background: #f2f2f2; color: #5f6368; }
  .toolbar > button { width: 28px; height: 28px; flex: none; }
  .toolbar svg { display: block; }
  .toolbar > button svg { fill: none; stroke: #6b6d70; stroke-width: 3; }
  .toolbar > button.off svg { stroke: #d0d0d0; }
  .toolbar .solid { fill: #6b6d70; stroke: none; }
  .omnibox { flex: 1; height: 54px; margin-left: -5px; margin-right: -8px; display: flex; align-items: center; gap: 12px; padding: 0 14px 0 12px; background: #fff; border: 2px solid #b9b9b9; border-radius: 6px; font-size: 27px; color: #111; }
  .omnibox svg { width: 28px; height: 28px; flex: none; fill: none; stroke: #5f6368; stroke-width: 2; }
  .url { flex: 1; }
  .url span { color: #777; }
  .extensions { display: flex; gap: 24px; }
  .ext { position: relative; width: 32px; height: 32px; flex: none; }
  .pale { color: #c6c6c6; display: block; height: 32px; }
  .badge { position: absolute; left: 16px; top: 16px; width: 24px; height: 24px; border-radius: 4px; background: #5e5e5e; color: #fff; font-size: 18px; line-height: 24px; text-align: center; }
  .dots { display: flex; flex-direction: column; align-items: center; justify-content: space-between; margin-left: -8px; padding: 2px 0; }
  .dots i { width: 6px; height: 6px; border-radius: 50%; background: #5f6368; }

  .bookmarks { height: 48px; display: flex; align-items: center; gap: 22px; padding: 0 16px 8px 25px; background: #f2f2f2; border-bottom: 1px solid #b6b6b6; font-size: 25px; color: #111; white-space: nowrap; }
  .bookmarks a { display: flex; align-items: center; gap: 8px; }
  .more { margin-left: auto; color: #666; }

  .appbar { height: 70px; display: flex; align-items: center; padding: 0 10px 0 34px; background: #05425f; color: #fff; font-family: Roboto, sans-serif; font-size: 27px; font-weight: 700; white-space: nowrap; }
  .logo { width: 148px; font: italic 900 38px Lato, sans-serif; }
  .suite { flex: 1; font-size: 32px; font-weight: 300; padding-bottom: 2px; }
  .drop { display: flex; align-items: center; gap: 15px; }
  .caret { border: 12px solid transparent; border-top: 12px solid #e0e0e0; border-bottom: 0; }
  .support { display: flex; align-items: center; gap: 12px; margin: 0 64px 0 40px; }
  .support span { width: 28px; height: 28px; }

  .body { flex: 1; display: flex; font-family: Roboto, sans-serif; }
  .sidebar { width: 300px; flex: none; background: #fafafa; color: #05425f; font-size: 32px; line-height: 32px; }
  .sidebar ul { display: grid; grid-auto-rows: 1fr; height: 1152px; }
  .sidebar li a { height: 100%; display: flex; align-items: center; gap: 13px; padding-left: 36px; }
  .ic { width: 32px; height: 32px; flex: none; }
  .current { display: flex; gap: 11px; padding: 21px 60px 23px 36px; background: #05425f; color: #fff; }

  main { flex: 1; min-width: 0; padding: 38px 50px 0; color: #000; }
  .heading { display: flex; justify-content: space-between; align-items: flex-start; }
  h1 { margin: 0; font-size: 80px; font-weight: 400; line-height: 98px; }
  .client { width: 680px; font-size: 28px; }
  .client label { display: block; line-height: 36px; margin-bottom: 8px; }
  .select-wrap { position: relative; }
  select { appearance: none; width: 100%; height: 70px; padding: 0 16px; border: 2px solid #ccc; border-radius: 10px; background: #fff; font: 26px Roboto, sans-serif; color: #000; }
  .select-wrap svg { position: absolute; right: 10px; top: 23px; width: 12px; height: 24px; }

  .columns { display: flex; gap: 60px; align-items: flex-start; margin-top: 32px; }
  .map { position: relative; flex: 1; height: 996px; overflow: hidden; font-family: "Liberation Sans", sans-serif; }
  .canvas { display: block; width: 100%; height: 100%; }
  .sheet path { vector-effect: non-scaling-stroke; }
  .water { fill: #77b5e2; stroke: #77b5e2; stroke-width: 2; stroke-linejoin: round; }
  .river { fill: none; stroke: #96c1d4; stroke-width: 2; stroke-linejoin: round; }
  .road { fill: none; stroke: #f1f0e4; stroke-width: 3; stroke-linejoin: round; }
  .casing { fill: none; stroke: #a9aa98; stroke-width: 10; stroke-linejoin: round; }
  .motorway { fill: none; stroke: #fbfaf5; stroke-width: 7; stroke-linejoin: round; }
  .shield { fill: #fff; stroke: #66697a; stroke-width: 2; }
  .shield-top { fill: #4a4c68; }
  .shield-text { font: 18px "Noto Sans", sans-serif; fill: #444; }
  .plane { fill: none; stroke: #6d6e70; stroke-width: 2; }
  .place { font: 500 22px "Noto Sans", sans-serif; fill: #333; stroke: rgba(255, 255, 255, .75); stroke-width: 4px; paint-order: stroke; stroke-linejoin: round; }
  .place .big { font-size: 26px; }
  .place .park { font-size: 20px; font-weight: 400; fill: #606060; }
  .zone { fill-opacity: .3; stroke-width: 4; stroke-linejoin: round; }
  .pin { fill: rgba(170, 100, 80, .25); stroke: rgba(90, 50, 40, .3); }
  .pin-text { font: 24px "Liberation Sans", sans-serif; fill: #fff; }

  .tooltip { position: absolute; left: 0; top: 280px; width: 134px; height: 56px; display: flex; align-items: center; justify-content: flex-end; padding-right: 20px; overflow: hidden; white-space: nowrap; background: rgba(0, 0, 0, .5); border-radius: 0 8px 8px 0; color: #fff; font-size: 24px; }
  .controls { position: absolute; left: 20px; top: 20px; display: flex; flex-direction: column; align-items: flex-start; gap: 20px; }
  .bar { width: 68px; border: 4px solid rgba(0, 0, 0, .2); border-radius: 8px; background: #fff; background-clip: padding-box; }
  .bar button { width: 60px; height: 60px; display: flex; align-items: center; justify-content: center; }
  .bar button + button { border-top: 2px solid #ccc; }
  .bar.zoom button { padding-top: 7px; }
  .bar.edit { margin-top: 4px; }
  .bar.edit button { padding-bottom: 5px; }
  .bar svg { width: 26px; height: 26px; }
  .thick { stroke: #000; stroke-width: 5; }
  .bar .solid { fill: #464646; }
  .line { fill: none; stroke: #464646; stroke-width: 3; }
  .line.thin { stroke-width: 2; }
  .draw { display: flex; align-items: flex-start; }
  .actions { display: flex; margin: 4px 0 0 -4px; height: 52px; background: #919187; border-radius: 0 8px 8px 0; overflow: hidden; color: #fff; font-size: 24px; }
  .actions button { padding: 0 20px; }
  .actions button + button { border-left: 2px solid #aaa; }
  .credit { position: absolute; right: 0; bottom: 0; height: 32px; padding: 0 12px 0 10px; background: rgba(255, 255, 255, .7); font-size: 22px; line-height: 32px; color: #0078a8; }

  .legend { width: 494px; flex: none; border: 2px solid #e5e5e5; font-size: 32px; }
  .legend h2 { margin: 0; padding: 0 31px 2px; font-size: 32px; font-weight: 400; line-height: 110px; background: #e5e5e5; }
  .legend ul { padding: 22px 0 42px 40px; }
  .legend li { display: flex; align-items: center; gap: 42px; height: 62px; line-height: 62px; }
  .legend li svg { width: 30px; height: 32px; flex: none; margin-top: 6px; }
</style>
